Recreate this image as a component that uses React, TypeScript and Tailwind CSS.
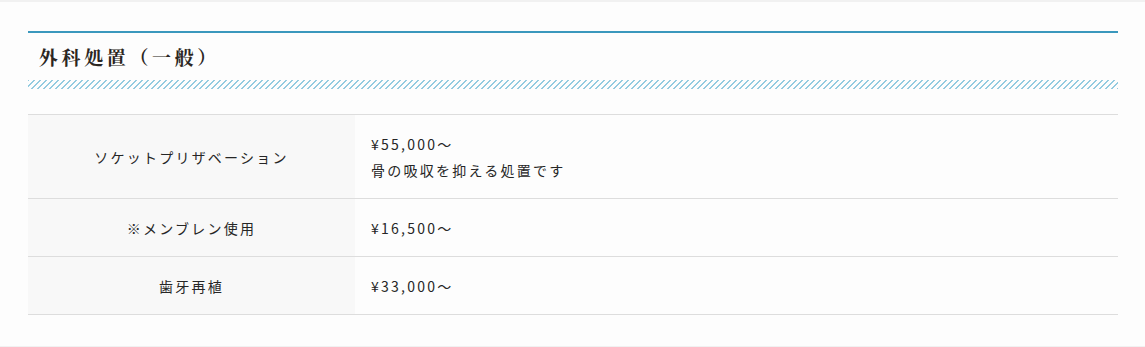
import React from 'react'

interface PriceRow {
  name: string
  lines: string[]
}

const rows: PriceRow[] = [
  { name: 'ソケットプリザベーション', lines: ['¥55,000～', '骨の吸収を抑える処置です'] },
  { name: '※メンブレン使用', lines: ['¥16,500～'] },
  { name: '歯牙再植', lines: ['¥33,000～'] }
]

const gothic = "font-['Noto_Sans_CJK_JP',sans-serif]"

export default function App() {
  return (
    <div className="min-h-[347px] bg-[#fdfdfd] border-t-2 border-b border-[#f1f1f1] pt-[29px] px-[28px] pb-[30px] box-border w-[1145px]">
      <div className="w-[1090px]">
        <div className="border-t-2 border-[#3a98bd]">
          <h2 className="h-[47px] flex items-center pl-[11px] pt-[1px] text-[19px] font-bold tracking-[0.19em] text-[#2b2622] font-['Noto_Serif_CJK_JP','Liberation_Serif','Noto_Sans_CJK_JP',serif]">
            外科処置（一般）
          </h2>
          {/* diagonal stripe band under the heading */}
          <div className="h-[9px] bg-[linear-gradient(135deg,#93cbe0_12.5%,transparent_12.5%,transparent_50%,#93cbe0_50%,#93cbe0_62.5%,transparent_62.5%,transparent)] bg-[length:6px_6px]" />
        </div>

        <table className={`mt-[25px] w-full border-collapse ${gothic} text-[14px] text-[#262626] tracking-[0.16em]`}>
          <tbody>
            {rows.map(row => (
              <tr key={row.name} className="border-y border-[#dddddd]">
                <th className="w-[327px] bg-[#f8f8f8] font-normal text-center py-[15.5px] leading-[26px]">
                  {row.name}
                </th>
                <td className="pl-[16px] py-[15.5px] leading-[26px] font-normal">
                  {row.lines.map(line => (
                    <div key={line}>{line}</div>
                  ))}
                </td>
              </tr>
            ))}
          </tbody>
        </table>
      </div>
    </div>
  )
}
